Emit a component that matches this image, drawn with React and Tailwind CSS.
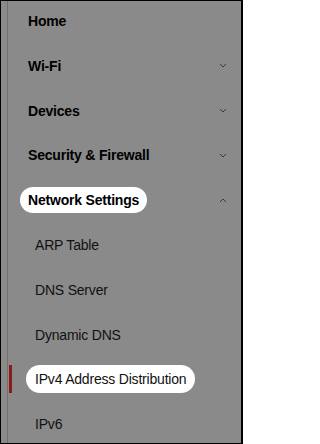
import { useState } from 'react'

const sections = [
  { label: 'Home' },
  { label: 'Wi-Fi', chevron: 'down' },
  { label: 'Devices', chevron: 'down' },
  { label: 'Security & Firewall', chevron: 'down' },
  { label: 'Network Settings', chevron: 'up', focused: true },
]

const children = [
  { label: 'ARP Table' },
  { label: 'DNS Server' },
  { label: 'Dynamic DNS' },
  { label: 'IPv4 Address Distribution' },
  { label: 'IPv6' },
]

function Chevron({ dir }) {
  return (
    <svg width="8" height="5" viewBox="0 0 8 5" className="shrink-0">
      {dir === 'down'
        ? <path d="M1 1 L4 4 L7 1" fill="none" stroke="#3a3a3a" strokeWidth="1" />
        : <path d="M1 4 L4 1 L7 4" fill="none" stroke="#3a3a3a" strokeWidth="1" />}
    </svg>
  )
}

export default function App() {
  const [active] = useState('IPv4 Address Distribution')

  return (
    <div
      className="w-[243px] h-[444px] overflow-hidden border border-black border-r-2 bg-[#8a8a8a] flex"
      style={{ fontFamily: '"Liberation Sans", Arial, sans-serif' }}
    >
      <div className="w-[6px] shrink-0" />
      <div className="w-px shrink-0 bg-[#6f6f6f]" />
      <nav className="flex-1 flex flex-col -mt-[2.4px]">
        {sections.map(s => (
          <div key={s.label} className="h-[44.8px] shrink-0 flex items-center pl-[12px] pr-[14px]">
            <span
              className={`text-[14px] font-bold text-black tracking-[-0.2px] leading-none ${
                s.focused ? 'bg-white rounded-full px-[8px] h-[26px] flex items-center' : 'pl-[8px]'
              }`}
            >
              {s.label}
            </span>
            <div className="flex-1" />
            {s.chevron && <Chevron dir={s.chevron} />}
          </div>
        ))}
        {children.map(c => {
          const on = c.label === active
          return (
            <div key={c.label} className="h-[44.8px] shrink-0 flex items-center">
              <div className={`ml-px w-[3px] h-[28px] ${on ? 'bg-[#8a1b1b]' : ''}`} />
              <span
                className={`ml-[14px] text-[14px] text-[#111] tracking-[-0.2px] leading-none ${
                  on ? 'bg-white rounded-full px-[9px] h-[28px] flex items-center' : 'pl-[9px]'
                }`}
              >
                {c.label}
              </span>
            </div>
          )
        })}
      </nav>
    </div>
  )
}
